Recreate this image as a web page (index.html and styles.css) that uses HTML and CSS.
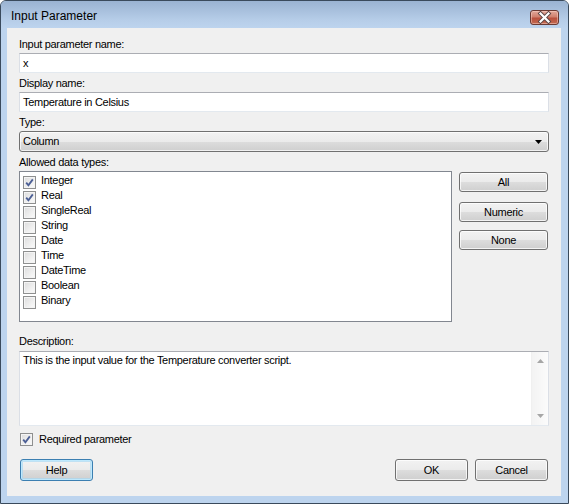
FILE: index.html
```html
<!DOCTYPE html>
<html>
<head>
<meta charset="utf-8">
<link rel="stylesheet" href="styles.css">
</head>
<body>
<div class="window">
  <div class="titlebar">
    <span class="title">Input Parameter</span>
    <span class="close">
      <svg width="29" height="15" viewBox="0 0 29 15">
        <path d="M10.5 3.5 L18.5 11.5 M18.5 3.5 L10.5 11.5" stroke="#5a4444" stroke-width="4" stroke-linecap="square"/>
        <path d="M10.5 3.5 L18.5 11.5 M18.5 3.5 L10.5 11.5" stroke="#ffffff" stroke-width="2.2" stroke-linecap="square"/>
      </svg>
    </span>
  </div>
  <div class="client">
    <div class="label">Input parameter name:</div>
    <div class="textbox">x</div>
    <div class="label">Display name:</div>
    <div class="textbox">Temperature in Celsius</div>
    <div class="label">Type:</div>
    <div class="combo">
      <span>Column</span>
      <svg class="arrow" width="7" height="4" viewBox="0 0 7 4"><path d="M0 0 H7 L3.5 4 Z" fill="#000"/></svg>
    </div>
    <div class="label">Allowed data types:</div>
    <div class="typesrow">
      <div class="listbox">
        <div class="item"><span class="cb checked"><svg width="11" height="11" viewBox="0 0 11 11"><path d="M2.2 5.6 L4.4 8.2 L8.8 2.4" stroke="#4c5f95" stroke-width="1.8" fill="none"/></svg></span>Integer</div>
        <div class="item"><span class="cb checked"><svg width="11" height="11" viewBox="0 0 11 11"><path d="M2.2 5.6 L4.4 8.2 L8.8 2.4" stroke="#4c5f95" stroke-width="1.8" fill="none"/></svg></span>Real</div>
        <div class="item"><span class="cb"></span>SingleReal</div>
        <div class="item"><span class="cb"></span>String</div>
        <div class="item"><span class="cb"></span>Date</div>
        <div class="item"><span class="cb"></span>Time</div>
        <div class="item"><span class="cb"></span>DateTime</div>
        <div class="item"><span class="cb"></span>Boolean</div>
        <div class="item"><span class="cb"></span>Binary</div>
      </div>
      <div class="sidebuttons">
        <div class="btn side first">All</div>
        <div class="btn side second">Numeric</div>
        <div class="btn side third">None</div>
      </div>
    </div>
    <div class="label desc-label">Description:</div>
    <div class="description">
      <div class="desc-text">This is the input value for the Temperature converter script.</div>
      <div class="scrollbar">
        <svg width="7" height="4" viewBox="0 0 7 4"><path d="M0 4 H7 L3.5 0 Z" fill="#a6a6a6"/></svg>
        <svg width="7" height="4" viewBox="0 0 7 4"><path d="M0 0 H7 L3.5 4 Z" fill="#a6a6a6"/></svg>
      </div>
    </div>
    <div class="required">
      <span class="cb checked"><svg width="11" height="11" viewBox="0 0 11 11"><path d="M2.2 5.6 L4.4 8.2 L8.8 2.4" stroke="#4c5f95" stroke-width="1.8" fill="none"/></svg></span>
      <span>Required parameter</span>
    </div>
    <div class="footer">
      <div class="btn footbtn default">Help</div>
      <div class="spacer"></div>
      <div class="btn footbtn">OK</div>
      <div class="btn footbtn">Cancel</div>
    </div>
  </div>
</div>
</body>
</html>
```

FILE: styles.css
```css
html, body {
  margin: 0;
  padding: 0;
  background: #ffffff;
}

.window {
  width: 569px;
  height: 504px;
  box-sizing: border-box;
  border: 1px solid #3a4a5c;
  border-radius: 6px 6px 0 0;
  background: #bdd4ee;
  display: flex;
  flex-direction: column;
  font-family: "Liberation Sans", Arial, sans-serif;
  font-size: 11px;
  letter-spacing: -0.3px;
  color: #000;
  overflow: hidden;
}

.titlebar {
  height: 27px;
  flex: none;
  box-sizing: border-box;
  padding: 8px 9px 0 10px;
  display: flex;
  align-items: flex-start;
  background: linear-gradient(#9ab3d2, #b6cde8 70%, #bdd4ee);
}

.title {
  font-size: 12px;
  line-height: 15px;
  letter-spacing: 0;
  color: #000;
}

.close {
  margin-left: auto;
  margin-top: 1px;
  width: 29px;
  height: 15px;
  box-sizing: border-box;
  border: 1px solid #6b3a33;
  border-radius: 3px;
  background: linear-gradient(#e2a89a, #d0806e 45%, #b9503d 55%, #c26a52);
  display: flex;
  align-items: center;
  justify-content: center;
  box-shadow: inset 0 0 0 1px rgba(255, 220, 210, 0.45);
}

.close svg {
  display: block;
  margin: -1px;
}

.client {
  flex: 1;
  margin: 0 7px 7px 6px;
  background: #f0f0f0;
  padding: 10px 12px 0 12px;
  display: flex;
  flex-direction: column;
}

.label {
  line-height: 13px;
  height: 13px;
  margin-bottom: 2px;
  white-space: nowrap;
}

.textbox {
  height: 20px;
  box-sizing: border-box;
  border: 1px solid #abadb3;
  border-left-color: #dbdfe6;
  border-right-color: #dbdfe6;
  border-bottom-color: #e3e9ef;
  background: #fff;
  padding: 0 3px;
  line-height: 18px;
  margin-bottom: 4px;
  white-space: nowrap;
}

.combo {
  height: 21px;
  box-sizing: border-box;
  border: 1px solid #707070;
  border-radius: 3px;
  background: linear-gradient(#f2f2f2, #ebebeb 50%, #dddddd 50%, #cfcfcf);
  box-shadow: inset 0 0 0 1px rgba(255, 255, 255, 0.7);
  padding: 0 6px 0 3px;
  line-height: 19px;
  display: flex;
  align-items: center;
  justify-content: space-between;
  margin-bottom: 4px;
}

.combo .arrow {
  display: block;
  margin-top: 1px;
}

.typesrow {
  display: flex;
  gap: 7px;
  height: 151px;
  margin-bottom: 13px;
}

.listbox {
  width: 433px;
  flex: none;
  box-sizing: border-box;
  border: 1px solid #828790;
  background: #fff;
  padding: 1px 0 0 3px;
}

.item {
  height: 15px;
  line-height: 15px;
  display: flex;
  align-items: flex-start;
  white-space: nowrap;
}

.item .cb {
  margin-top: 3px;
  margin-right: 5px;
}

.cb {
  width: 13px;
  height: 13px;
  flex: none;
  box-sizing: border-box;
  border: 1px solid #8e8f8f;
  background: linear-gradient(135deg, #dcdcdc, #f6f6f6 80%);
  box-shadow: inset 0 0 0 1px #f4f4f4;
  display: flex;
  align-items: center;
  justify-content: center;
}

.cb svg {
  display: block;
}

.sidebuttons {
  width: 89px;
  flex: none;
  display: flex;
  flex-direction: column;
  padding-top: 1px;
}

.btn {
  box-sizing: border-box;
  border: 1px solid #707070;
  border-radius: 3px;
  background: linear-gradient(#f2f2f2, #ebebeb 50%, #dddddd 50%, #cfcfcf);
  box-shadow: inset 0 0 0 1px rgba(255, 255, 255, 0.75);
  display: flex;
  align-items: center;
  justify-content: center;
  white-space: nowrap;
}

.side {
  height: 20px;
}

.side.second {
  margin-top: 10px;
}

.side.third {
  margin-top: 8px;
}

.desc-label {
  margin-bottom: 3px;
}

.description {
  height: 75px;
  box-sizing: border-box;
  border: 1px solid #abadb3;
  border-left-color: #dbdfe6;
  border-right-color: #dbdfe6;
  border-bottom-color: #e3e9ef;
  background: #fff;
  display: flex;
}

.desc-text {
  flex: 1;
  padding: 2px 3px 0 3px;
  line-height: 13px;
}

.scrollbar {
  width: 17px;
  flex: none;
  background: linear-gradient(90deg, #f3f3f3, #fbfbfb);
  border-left: 1px solid #f0f0f0;
  display: flex;
  flex-direction: column;
  justify-content: space-between;
  align-items: center;
  padding: 7px 0 7px 0;
  box-sizing: border-box;
}

.scrollbar svg {
  display: block;
}

.required {
  margin-top: 6px;
  height: 15px;
  display: flex;
  align-items: center;
  gap: 6px;
  padding-left: 1px;
  line-height: 15px;
}

.footer {
  margin-top: 12px;
  display: flex;
  padding-left: 1px;
  padding-right: 1px;
  gap: 7px;
}

.spacer {
  flex: 1;
}

.footbtn {
  width: 73px;
  height: 22px;
}

.footbtn.default {
  border-color: #3c7fb1;
  box-shadow: inset 0 0 0 1px #bde8fd, inset 0 0 0 2px rgba(160, 215, 245, 0.6);
}
```
